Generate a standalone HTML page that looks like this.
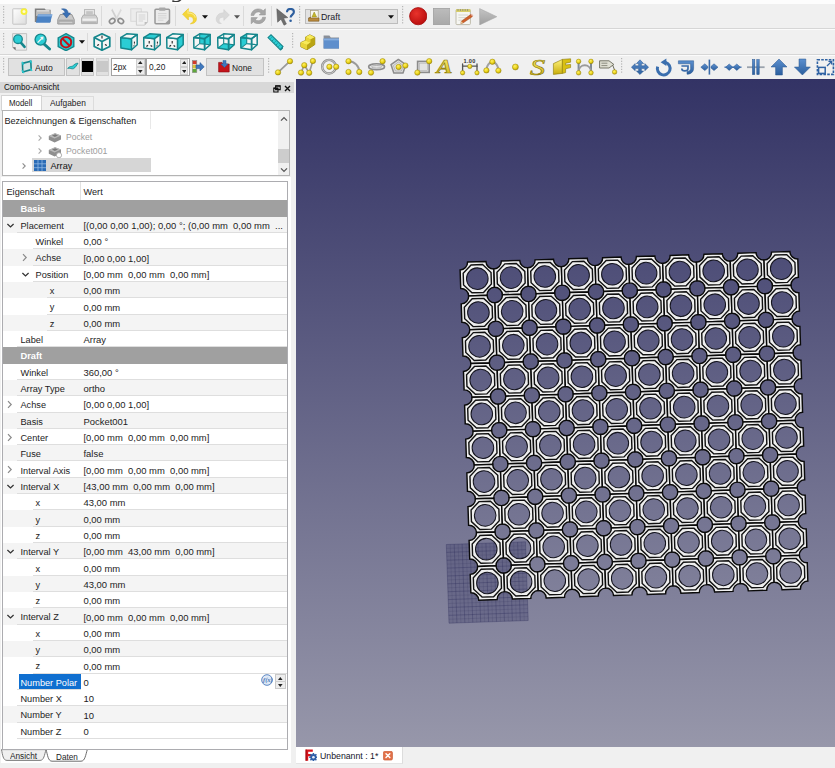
<!DOCTYPE html>
<html><head><meta charset="utf-8">
<style>
*{box-sizing:border-box;margin:0;padding:0}
html,body{width:835px;height:768px;overflow:hidden;background:#f0f0f0;font-family:"Liberation Sans",sans-serif;font-size:10.5px;color:#1c1c1c}
#root{position:relative;width:835px;height:768px;overflow:hidden;background:#f0f0f0}
.abs{position:absolute}
/* 3D view */
#view{position:absolute;left:296px;top:79px;width:539px;height:668px;background:linear-gradient(#333365 0%,#9797aa 100%)}
#viewsvg{position:absolute;left:0;top:0;width:835px;height:768px}
/* panel */
#panel{position:absolute;left:0;top:80px;width:296px;height:688px;background:#f0f0f0}
#ptitle{position:absolute;left:0;top:1.5px;width:293.5px;height:11.5px;background:#d8d8d8;}
#ptitle span{position:absolute;left:3.8px;top:0.6px;font-size:9.2px;color:#111;transform:scaleX(.88);transform-origin:0 0;white-space:nowrap}
.tab1{position:absolute;font-size:9.2px}
#tree{position:absolute;left:1.6px;top:30px;width:288.9px;height:66px;background:#fff;border:1px solid #b4b4b4;overflow:hidden}
#tbl{position:absolute;left:2.2px;top:100.6px;width:286px;height:569px;background:#fff;border:1px solid #acacb0;overflow:hidden}
.row,.grp{position:absolute;left:3.2px;width:284px}
#rows{position:absolute;left:0px;top:-80px;width:290px}
.row{background:#fff}
.ln{position:absolute;bottom:0;right:0;height:1px;background:#dedede}
.row.alt{background:#f4f4f4}
.grp{background:#a0a0a0;color:#fff;font-weight:bold}
.grp span{position:absolute;top:3.6px;font-size:9.3px;white-space:nowrap}
.nm{position:absolute;top:4.1px;white-space:nowrap;font-size:9.2px}
.nm i{font-style:normal;white-space:nowrap}
.nm.sel{top:0;height:100%;background:#0f6fd0;color:#fff;padding-left:1px;padding-top:4.1px}
.vl{position:absolute;left:80.3px;top:3.3px;white-space:nowrap;font-size:9.45px}
.arr{position:absolute;top:4px}
.hd{font-size:9.2px;white-space:nowrap}
.tx{position:absolute;white-space:nowrap;transform-origin:0 0;line-height:normal;font-size:9.2px}
.coldiv{position:absolute;left:77.3px;top:0;width:1px;height:557.4px;background:#e2e2e2}
</style></head><body><div id="root">
<!-- toolbars -->
<div class="abs" style="left:0px;top:0px;width:835px;height:3.5px;background:#fdfdfd"></div>
<div class="abs" style="left:0px;top:28.3px;width:835px;height:1px;background:#d6d6d6"></div>
<div class="abs" style="left:0px;top:29.3px;width:835px;height:1px;background:#fbfbfb"></div>
<div class="abs" style="left:0px;top:53.8px;width:835px;height:1px;background:#d6d6d6"></div>
<div class="abs" style="left:0px;top:54.8px;width:835px;height:1px;background:#fbfbfb"></div>
<svg class="abs" style="left:171.5px;top:0px" width="10" height="2.4" viewBox="0 0 10 2.4"><path d="M0.4,0.6 C2,2.4 6.4,2.2 9,-0.6" fill="none" stroke="#3a3a3a" stroke-width="1.5"/></svg>
<svg class="abs" style="left:3px;top:6px" width="2" height="20" viewBox="0 0 2 20"><rect x="0" y="0.0" width="1.2" height="1.2" fill="#b5b5b5"/><rect x="0" y="2.7" width="1.2" height="1.2" fill="#b5b5b5"/><rect x="0" y="5.4" width="1.2" height="1.2" fill="#b5b5b5"/><rect x="0" y="8.1" width="1.2" height="1.2" fill="#b5b5b5"/><rect x="0" y="10.8" width="1.2" height="1.2" fill="#b5b5b5"/><rect x="0" y="13.5" width="1.2" height="1.2" fill="#b5b5b5"/><rect x="0" y="16.2" width="1.2" height="1.2" fill="#b5b5b5"/></svg>
<svg class="abs" style="left:12px;top:8px" width="16" height="17" viewBox="0 0 16 17"><defs><linearGradient id="gp" x1="0" y1="0" x2="1" y2="1"><stop offset="0" stop-color="#ffffff"/><stop offset="1" stop-color="#dcdcdc"/></linearGradient></defs>
<rect x="0.8" y="0.8" width="13.4" height="15.4" rx=".4" fill="url(#gp)" stroke="#c4c4c4" stroke-width="1"/>
<circle cx="12" cy="3.6" r="3.4" fill="#f6ef3a"/><circle cx="12" cy="3.6" r="1.5" fill="#fffbd0"/></svg>
<svg class="abs" style="left:33.5px;top:8px" width="19" height="16" viewBox="0 0 19 16"><path d="M0.8,0.6 H10.6 L11.8,1.8 H16.6 V14 H0.8 Z" fill="#7f7f7f"/><path d="M2.4,2 H15.6 V8 H2.4 Z" fill="#d6d6d6"/><path d="M2.4,3.6 H15.6 V8 H2.4 Z" fill="#bdbdbd"/>
<path d="M4,6.5 H18.4 L16.2,14.8 H1.8 Z" fill="#4a82c4"/><path d="M4,6.5 H18.4 L17.8,8.6 H3.4 Z" fill="#7fabdf"/></svg>
<svg class="abs" style="left:57px;top:7.5px" width="18" height="17" viewBox="0 0 18 17"><path d="M3.2,6.5 H14.8 L17.2,11.5 V16 H0.8 V11.5 Z" fill="#c9c9c9" stroke="#8c8c8c" stroke-width=".9"/>
<rect x="1.4" y="11.6" width="15.2" height="4" fill="#a9a9a9"/><rect x="2.4" y="13.8" width="13" height="1" fill="#d8d8d8"/>
<path d="M4.5,1 C8.5,0.2 11,1.8 11.2,5 L13.6,5 L9.6,10 L5.6,5 L8,5 C7.8,3 6.5,1.8 4.5,1 Z" fill="#3a70b5" stroke="#2c5a96" stroke-width=".5"/></svg>
<svg class="abs" style="left:80.5px;top:8.5px" width="17" height="16" viewBox="0 0 17 16"><rect x="3.4" y="0.6" width="10.2" height="6" fill="#e4e4e4" stroke="#b0b0b0" stroke-width=".8"/><rect x="5.2" y="2.2" width="6.6" height="3" fill="#c4c4c4"/>
<path d="M2.4,6 H14.6 L16.4,9 V14.6 H0.6 V9 Z" fill="#cfcfcf" stroke="#a2a2a2" stroke-width=".8"/><rect x="1.4" y="9.6" width="14.2" height="2.2" fill="#efefef"/><rect x="1.4" y="12.6" width="14.2" height="1.4" fill="#b6b6b6"/></svg>
<div class="abs" style="left:101.3px;top:6px;width:1px;height:20px;background:#dadada"></div>
<svg class="abs" style="left:107.5px;top:8px" width="17" height="17" viewBox="0 0 17 17"><path d="M4.2,0.6 L9.6,10.6 L8,11.4 L3.4,2.6 Z" fill="#cfcfcf"/><path d="M12.8,0.6 L7.4,10.6 L9,11.4 L13.6,2.6 Z" fill="#dadada"/>
<ellipse cx="4.2" cy="13" rx="2.9" ry="2.3" transform="rotate(-35 4.2 13)" fill="none" stroke="#8e8e8e" stroke-width="1.7"/>
<ellipse cx="12.8" cy="13" rx="2.9" ry="2.3" transform="rotate(35 12.8 13)" fill="none" stroke="#8e8e8e" stroke-width="1.7"/></svg>
<svg class="abs" style="left:129.5px;top:7.5px" width="19" height="18" viewBox="0 0 19 18"><rect x="0.8" y="0.8" width="10.5" height="12.5" fill="#ececec" stroke="#d9d9d9" stroke-width="1"/>
<path d="M6.4,4 H17.6 V14 L14.6,17.2 H6.4 Z" fill="#f0f0f0" stroke="#cfcfcf" stroke-width="1"/><path d="M8.6,7 H15.4 M8.6,9 H15.4 M8.6,11 H15.4 M8.6,13 H13" stroke="#d4d4d4" stroke-width="1"/><path d="M14.6,17.2 V14 H17.6 Z" fill="#bdbdbd"/></svg>
<svg class="abs" style="left:154px;top:7.3px" width="16.5" height="17.6" viewBox="0 0 16.5 17.6"><rect x="1" y="2.2" width="14.5" height="14.6" rx="1" fill="#ebebeb" stroke="#999" stroke-width="1.5"/><rect x="5" y="0.4" width="6.5" height="3.4" rx=".8" fill="#a9a9a9"/>
<path d="M4,6.6 H12.5 M4,8.8 H12.5 M4,11 H12.5 M4,13.2 H9.5" stroke="#d0d0d0" stroke-width=".9"/><path d="M11.2,16.2 L15,12.6 V16.2 Z" fill="#9d9d9d"/></svg>
<div class="abs" style="left:175px;top:6px;width:1px;height:20px;background:#dadada"></div>
<svg class="abs" style="left:181.5px;top:8px" width="16" height="16.5" viewBox="0 0 16 16.5"><path d="M6.4,0.6 L6.4,4 C11.4,4 14.6,7 14.4,11.4 C14.2,14.2 11.6,15.8 8.4,15.8 C11,14.6 11.8,12.6 11.2,10.8 C10.6,9 9,8.6 6.4,8.6 L6.4,12 L0.6,6.2 Z" fill="#f4d63a" stroke="#e8c41a" stroke-width=".6"/><path d="M6,2 L6,5 C9.5,5 12.6,6.8 13.4,9.6" fill="none" stroke="#fbeb8c" stroke-width="1.1"/></svg>
<svg class="abs" style="left:202.3px;top:14.8px" width="6" height="4" viewBox="0 0 6 4"><path d="M0,0.3 H6 L3,3.8 Z" fill="#111"/></svg>
<svg class="abs" style="left:214.8px;top:8.5px" width="15" height="15.5" viewBox="0 0 15 15.5"><path d="M8.8,0.6 L8.8,3.8 C4,3.8 1,6.6 1.2,10.8 C1.4,13.4 3.6,15 6.6,15 C4.4,13.8 3.8,12 4.2,10.4 C4.8,8.6 6.4,8.2 8.8,8.2 L8.8,11.4 L14.4,6 Z" fill="#d9d9d9" stroke="#cdcdcd" stroke-width=".5"/></svg>
<svg class="abs" style="left:234.4px;top:14.8px" width="6" height="4" viewBox="0 0 6 4"><path d="M0,0.3 H6 L3,3.8 Z" fill="#555"/></svg>
<div class="abs" style="left:243.2px;top:6px;width:1px;height:20px;background:#dadada"></div>
<svg class="abs" style="left:249.5px;top:7.8px" width="16.6" height="16.6" viewBox="0 0 16.6 16.6"><path d="M1,7.4 C1.4,3.4 4.6,0.9 8.4,0.9 C10.4,0.9 12,1.6 13.2,2.8 L15.4,0.8 V7 H9.2 L11.2,4.9 C10.4,4.2 9.4,3.9 8.4,3.9 C6,3.9 4.4,5.4 4,7.4 Z" fill="#a6a6a6" stroke="#8f8f8f" stroke-width=".5"/>
<path d="M15.6,9.2 C15.2,13.2 12,15.7 8.2,15.7 C6.2,15.7 4.6,15 3.4,13.8 L1.2,15.8 V9.6 H7.4 L5.4,11.7 C6.2,12.4 7.2,12.7 8.2,12.7 C10.6,12.7 12.2,11.2 12.6,9.2 Z" fill="#a6a6a6" stroke="#8f8f8f" stroke-width=".5"/></svg>
<div class="abs" style="left:270.7px;top:6px;width:1px;height:20px;background:#dadada"></div>
<svg class="abs" style="left:275.5px;top:7.5px" width="19" height="18" viewBox="0 0 19 18"><path d="M0.8,0.8 L1.6,14.2 L5,11.2 L8,17.2 L10.4,16 L7.6,10.2 L11.8,9.6 Z" fill="#6e6e6e" stroke="#555" stroke-width=".5"/>
<path d="M11,4.2 C11,1.8 12.6,0.9 14.4,0.9 C16.4,0.9 17.9,2 17.9,4 C17.9,6.6 14.6,6.6 14.6,9.6" fill="none" stroke="#2e5f9e" stroke-width="2.1"/><circle cx="14.6" cy="12.8" r="1.3" fill="#2e5f9e"/></svg>
<svg class="abs" style="left:298.5px;top:6px" width="2" height="20" viewBox="0 0 2 20"><rect x="0" y="0.0" width="1.2" height="1.2" fill="#b5b5b5"/><rect x="0" y="2.7" width="1.2" height="1.2" fill="#b5b5b5"/><rect x="0" y="5.4" width="1.2" height="1.2" fill="#b5b5b5"/><rect x="0" y="8.1" width="1.2" height="1.2" fill="#b5b5b5"/><rect x="0" y="10.8" width="1.2" height="1.2" fill="#b5b5b5"/><rect x="0" y="13.5" width="1.2" height="1.2" fill="#b5b5b5"/><rect x="0" y="16.2" width="1.2" height="1.2" fill="#b5b5b5"/></svg>
<div class="abs" style="left:305px;top:8.8px;width:92.6px;height:14.8px;background:#e2e2e2;border:1px solid #bdbdbd"></div>
<svg class="abs" style="left:308.4px;top:10.2px" width="11.6" height="12" viewBox="0 0 11.6 12"><rect x="2.6" y="0.5" width="7.6" height="8.4" fill="#f7f7f0" stroke="#a59a78" stroke-width=".7"/><path d="M4,7 L6.2,2 L8.6,7 Z" fill="#c7b92a" stroke="#8d8412" stroke-width=".5"/>
<path d="M0.5,8 H11 V11.2 H0.5 Z" fill="#b98a3c" stroke="#7d5a22" stroke-width=".6"/><path d="M0.5,8 L2.6,6.8 V8" fill="#7d5a22"/></svg>
<div class="abs" style="left:321.3px;top:10.6px;font-size:9.6px;color:#1a1a2a;transform:scaleX(.92);transform-origin:0 0;white-space:nowrap">Draft</div>
<svg class="abs" style="left:388px;top:14.9px" width="6" height="4" viewBox="0 0 6 4"><path d="M0,0.3 H6 L3,3.8 Z" fill="#111"/></svg>
<svg class="abs" style="left:401.7px;top:6px" width="2" height="20" viewBox="0 0 2 20"><rect x="0" y="0.0" width="1.2" height="1.2" fill="#b5b5b5"/><rect x="0" y="2.7" width="1.2" height="1.2" fill="#b5b5b5"/><rect x="0" y="5.4" width="1.2" height="1.2" fill="#b5b5b5"/><rect x="0" y="8.1" width="1.2" height="1.2" fill="#b5b5b5"/><rect x="0" y="10.8" width="1.2" height="1.2" fill="#b5b5b5"/><rect x="0" y="13.5" width="1.2" height="1.2" fill="#b5b5b5"/><rect x="0" y="16.2" width="1.2" height="1.2" fill="#b5b5b5"/></svg>
<svg class="abs" style="left:408.8px;top:7.2px" width="18.4" height="18.4" viewBox="0 0 18.4 18.4"><defs><radialGradient id="gr" cx=".4" cy=".35" r=".7"><stop offset="0" stop-color="#e8332c"/><stop offset="1" stop-color="#b80d0d"/></radialGradient></defs><circle cx="9.2" cy="9.2" r="8.6" fill="url(#gr)" stroke="#a30a0a" stroke-width=".8"/></svg>
<svg class="abs" style="left:432.5px;top:7.8px" width="17.5" height="17.5" viewBox="0 0 17.5 17.5"><defs><linearGradient id="gs" x1="0" y1="0" x2="0" y2="1"><stop offset="0" stop-color="#bcbcbc"/><stop offset="1" stop-color="#a8a8a8"/></linearGradient></defs><rect x=".4" y=".4" width="16.7" height="16.7" fill="url(#gs)" stroke="#a0a0a0" stroke-width=".8"/></svg>
<svg class="abs" style="left:455px;top:8px" width="19" height="17.5" viewBox="0 0 19 17.5"><rect x="1" y="1.6" width="14.4" height="15" rx="1" fill="#f6f6f2" stroke="#b9b6a4" stroke-width=".9"/><rect x="1" y="1.2" width="14.4" height="2.8" fill="#d8cf6a"/><path d="M3,1 V3 M5.4,1 V3 M7.8,1 V3 M10.2,1 V3 M12.6,1 V3" stroke="#8a8a7a" stroke-width=".8"/>
<path d="M3.4,7 H13 M3.4,9.6 H11 M3.4,12.2 H9" stroke="#d2d2cc" stroke-width=".9"/><path d="M6.4,13.2 L15.6,6.6 L17.4,8.6 L8,15 L5.8,15.4 Z" fill="#d0602a" stroke="#9a3f14" stroke-width=".5"/><path d="M15.6,6.6 L17.4,8.6 L18.4,7.8 L16.8,5.8 Z" fill="#e8b0a0"/><path d="M5.8,15.4 L6.4,13.2 L8,15 Z" fill="#e8d6a0"/></svg>
<svg class="abs" style="left:478.5px;top:7.8px" width="18.5" height="17.5" viewBox="0 0 18.5 17.5"><defs><linearGradient id="gpl" x1="0" y1="0" x2="0" y2="1"><stop offset="0" stop-color="#c4c4c4"/><stop offset="1" stop-color="#9f9f9f"/></linearGradient></defs><path d="M0.6,0.6 L17.8,8.7 L0.6,16.9 Z" fill="url(#gpl)" stroke="#aaa" stroke-width=".6"/></svg>
<svg class="abs" style="left:3px;top:33px" width="2" height="18" viewBox="0 0 2 18"><rect x="0" y="0.0" width="1.2" height="1.2" fill="#b5b5b5"/><rect x="0" y="2.7" width="1.2" height="1.2" fill="#b5b5b5"/><rect x="0" y="5.4" width="1.2" height="1.2" fill="#b5b5b5"/><rect x="0" y="8.1" width="1.2" height="1.2" fill="#b5b5b5"/><rect x="0" y="10.8" width="1.2" height="1.2" fill="#b5b5b5"/><rect x="0" y="13.5" width="1.2" height="1.2" fill="#b5b5b5"/></svg>
<svg class="abs" style="left:12px;top:33px" width="15.5" height="18" viewBox="0 0 15.5 18"><path d="M0.6,0.6 H14.6 V17.2 H3.6 L0.6,14.2 Z" fill="#ebebeb" stroke="#bcbcbc" stroke-width=".9"/><path d="M0.6,14.2 H3.6 V17.2 Z" fill="#6a6a6a"/>
<path d="M8,8.6 L12.6,13.8" stroke="#15868c" stroke-width="2.6" stroke-linecap="round"/><circle cx="6" cy="6.2" r="4.3" fill="#2bcdd4" stroke="#15868c" stroke-width="1.3"/></svg>
<svg class="abs" style="left:33.8px;top:33px" width="17.6" height="18" viewBox="0 0 17.6 18"><path d="M9.6,10.6 L15.6,16" stroke="#15868c" stroke-width="2.8" stroke-linecap="round"/><circle cx="6.6" cy="6.6" r="5.5" fill="#2bcdd4" stroke="#15868c" stroke-width="1.4"/>
<path d="M3.6,9.6 L8,5.2" stroke="#f2f2f2" stroke-width="1.3"/><path d="M9.6,3.6 L9.2,7.2 L6,4 Z" fill="#f2f2f2"/></svg>
<svg class="abs" style="left:56.6px;top:32.8px" width="18" height="18.4" viewBox="0 0 18 18.4"><path d="M9,0.7 L16.8,4.9 V13.5 L9,17.7 L1.2,13.5 V4.9 Z" fill="#2bcdd4" stroke="#15868c" stroke-width="1.4"/>
<circle cx="9" cy="9.2" r="5.2" fill="none" stroke="#c4121a" stroke-width="2"/><path d="M5.4,5.6 L12.6,12.8" stroke="#c4121a" stroke-width="2"/></svg>
<svg class="abs" style="left:79px;top:40.2px" width="6" height="4" viewBox="0 0 6 4"><path d="M0,0.3 H6 L3,3.8 Z" fill="#111"/></svg>
<div class="abs" style="left:87.3px;top:33px;width:1px;height:18px;background:#dadada"></div>
<svg class="abs" style="left:92.8px;top:33px" width="18" height="18" viewBox="0 0 18 18"><path d="M9,0.8 L16.8,4.6 L16.8,13.4 L9,17.2 L1.2,13.4 L1.2,4.6 Z" fill="#f6f6f6" /><path d="M9,0.8 L16.8,4.6 V13.4 L9,17.2 L1.2,13.4 V4.6 Z" fill="none" stroke="#15868c" stroke-width="1.7" stroke-linejoin="round"/><path d="M1.2,4.6 L9,8.6 L16.8,4.6 M9,8.6 V17.2" fill="none" stroke="#15868c" stroke-width="1.7"/><path d="M9,2.6 V5.6" stroke="#222" stroke-width="1.1"/><path d="M4.2,12.6 L6,11.4" stroke="#222" stroke-width="1.2"/><path d="M12,11.4 L13.8,12.4" stroke="#222" stroke-width="1.2"/></svg>
<div class="abs" style="left:114.5px;top:33px;width:1px;height:18px;background:#dadada"></div>
<svg class="abs" style="left:120px;top:33px" width="18" height="18" viewBox="0 0 18 18"><path d="M0.7,4.6 L6.7,0.8 L17.2,1.6 L17.2,11.8 L11.6,16.7 L0.9,15.1 Z" fill="#f6f6f6" /><path d="M0.7,4.6 L11.6,5.7 L11.6,16.7 L0.9,15.1 Z" fill="#2bcdd4" stroke="#15868c" stroke-width="1.5" stroke-linejoin="round"/><path d="M0.7,4.6 L6.7,0.8 L17.2,1.6 L11.6,5.7 Z" fill="#f6f6f6" stroke="#15868c" stroke-width="1.5" stroke-linejoin="round"/><path d="M11.6,5.7 L17.2,1.6 L17.2,11.8 L11.6,16.7 Z" fill="#f6f6f6" stroke="#15868c" stroke-width="1.5" stroke-linejoin="round"/><path d="M14.4,8.6 V10.6" stroke="#222" stroke-width="1"/><path d="M13.4,13 L14.6,12" stroke="#222" stroke-width="1"/></svg>
<svg class="abs" style="left:143px;top:33px" width="18" height="18" viewBox="0 0 18 18"><path d="M0.7,4.6 L6.7,0.8 L17.2,1.6 L17.2,11.8 L11.6,16.7 L0.9,15.1 Z" fill="#f6f6f6" /><path d="M0.7,4.6 L11.6,5.7 L11.6,16.7 L0.9,15.1 Z" fill="#f6f6f6" stroke="#15868c" stroke-width="1.5" stroke-linejoin="round"/><path d="M0.7,4.6 L6.7,0.8 L17.2,1.6 L11.6,5.7 Z" fill="#2bcdd4" stroke="#15868c" stroke-width="1.5" stroke-linejoin="round"/><path d="M11.6,5.7 L17.2,1.6 L17.2,11.8 L11.6,16.7 Z" fill="#f6f6f6" stroke="#15868c" stroke-width="1.5" stroke-linejoin="round"/><path d="M6.2,8 V10.4" stroke="#222" stroke-width="1.1"/><path d="M3.4,13.4 L5,12.2" stroke="#222" stroke-width="1.2"/><path d="M7.6,12.4 L9.2,13.4" stroke="#222" stroke-width="1.2"/><path d="M14.4,8.6 V10.6" stroke="#222" stroke-width="1"/><path d="M13.4,13 L14.6,12" stroke="#222" stroke-width="1"/></svg>
<svg class="abs" style="left:166px;top:33px" width="18" height="18" viewBox="0 0 18 18"><path d="M0.7,4.6 L6.7,0.8 L17.2,1.6 L17.2,11.8 L11.6,16.7 L0.9,15.1 Z" fill="#f6f6f6" /><path d="M0.7,4.6 L11.6,5.7 L11.6,16.7 L0.9,15.1 Z" fill="#f6f6f6" stroke="#15868c" stroke-width="1.5" stroke-linejoin="round"/><path d="M0.7,4.6 L6.7,0.8 L17.2,1.6 L11.6,5.7 Z" fill="#f6f6f6" stroke="#15868c" stroke-width="1.5" stroke-linejoin="round"/><path d="M11.6,5.7 L17.2,1.6 L17.2,11.8 L11.6,16.7 Z" fill="#2bcdd4" stroke="#15868c" stroke-width="1.5" stroke-linejoin="round"/><path d="M6.2,8 V10.4" stroke="#222" stroke-width="1.1"/><path d="M3.4,13.4 L5,12.2" stroke="#222" stroke-width="1.2"/><path d="M7.6,12.4 L9.2,13.4" stroke="#222" stroke-width="1.2"/></svg>
<div class="abs" style="left:187.3px;top:33px;width:1px;height:18px;background:#dadada"></div>
<svg class="abs" style="left:193.3px;top:33px" width="18" height="18" viewBox="0 0 18 18"><path d="M0.7,4.6 L6.7,0.8 L17.2,1.6 L17.2,11.8 L11.6,16.7 L0.9,15.1 Z" fill="#f6f6f6" /><path d="M6.7,0.8 L17.2,1.6 L17.2,11.8 L6.7,10.6 Z" fill="#2bcdd4" /><path d="M0.7,4.6 L6.7,0.8 L6.7,10.6 L0.9,15.1 Z" fill="#f6f6f6" /><path d="M0.9,15.1 L6.7,10.6 L17.2,11.8 L11.6,16.7 Z" fill="#f6f6f6" /><path d="M6.7,0.8 V10.6 L0.9,15.1 M6.7,10.6 L17.2,11.8" fill="none" stroke="#15868c" stroke-width="1.1"/><path d="M0.7,4.6 L11.6,5.7 L11.6,16.7 L0.9,15.1 Z" fill="none" stroke="#15868c" stroke-width="1.5" stroke-linejoin="round"/><path d="M0.7,4.6 L6.7,0.8 L17.2,1.6 L11.6,5.7 Z" fill="none" stroke="#15868c" stroke-width="1.5" stroke-linejoin="round"/><path d="M11.6,5.7 L17.2,1.6 L17.2,11.8 L11.6,16.7 Z" fill="none" stroke="#15868c" stroke-width="1.5" stroke-linejoin="round"/></svg>
<svg class="abs" style="left:216.6px;top:33px" width="18" height="18" viewBox="0 0 18 18"><path d="M0.7,4.6 L6.7,0.8 L17.2,1.6 L17.2,11.8 L11.6,16.7 L0.9,15.1 Z" fill="#f6f6f6" /><path d="M6.7,0.8 L17.2,1.6 L17.2,11.8 L6.7,10.6 Z" fill="#f6f6f6" /><path d="M0.7,4.6 L6.7,0.8 L6.7,10.6 L0.9,15.1 Z" fill="#f6f6f6" /><path d="M0.9,15.1 L6.7,10.6 L17.2,11.8 L11.6,16.7 Z" fill="#2bcdd4" /><path d="M6.7,0.8 V10.6 L0.9,15.1 M6.7,10.6 L17.2,11.8" fill="none" stroke="#15868c" stroke-width="1.1"/><path d="M0.7,4.6 L11.6,5.7 L11.6,16.7 L0.9,15.1 Z" fill="none" stroke="#15868c" stroke-width="1.5" stroke-linejoin="round"/><path d="M0.7,4.6 L6.7,0.8 L17.2,1.6 L11.6,5.7 Z" fill="none" stroke="#15868c" stroke-width="1.5" stroke-linejoin="round"/><path d="M11.6,5.7 L17.2,1.6 L17.2,11.8 L11.6,16.7 Z" fill="none" stroke="#15868c" stroke-width="1.5" stroke-linejoin="round"/></svg>
<svg class="abs" style="left:240px;top:33px" width="18" height="18" viewBox="0 0 18 18"><path d="M0.7,4.6 L6.7,0.8 L17.2,1.6 L17.2,11.8 L11.6,16.7 L0.9,15.1 Z" fill="#f6f6f6" /><path d="M6.7,0.8 L17.2,1.6 L17.2,11.8 L6.7,10.6 Z" fill="#f6f6f6" /><path d="M0.7,4.6 L6.7,0.8 L6.7,10.6 L0.9,15.1 Z" fill="#2bcdd4" /><path d="M0.9,15.1 L6.7,10.6 L17.2,11.8 L11.6,16.7 Z" fill="#f6f6f6" /><path d="M6.7,0.8 V10.6 L0.9,15.1 M6.7,10.6 L17.2,11.8" fill="none" stroke="#15868c" stroke-width="1.1"/><path d="M0.7,4.6 L11.6,5.7 L11.6,16.7 L0.9,15.1 Z" fill="none" stroke="#15868c" stroke-width="1.5" stroke-linejoin="round"/><path d="M0.7,4.6 L6.7,0.8 L17.2,1.6 L11.6,5.7 Z" fill="none" stroke="#15868c" stroke-width="1.5" stroke-linejoin="round"/><path d="M11.6,5.7 L17.2,1.6 L17.2,11.8 L11.6,16.7 Z" fill="none" stroke="#15868c" stroke-width="1.5" stroke-linejoin="round"/></svg>
<svg class="abs" style="left:266.5px;top:33.5px" width="17" height="17" viewBox="0 0 17 17"><path d="M1,3.6 L4,0.8 L16,12.6 L13.2,15.6 Z" fill="#2bcdd4" stroke="#15868c" stroke-width="1.1"/><path d="M13.2,15.6 L16,12.6 V14.6 L13.6,16.8 Z" fill="#15868c"/>
<path d="M4.6,3.4 L3.4,4.6 M6.6,5.4 L5,7 M8.6,7.4 L7.4,8.6 M10.6,9.4 L9,11 M12.6,11.4 L11.4,12.6" stroke="#15868c" stroke-width=".8"/></svg>
<svg class="abs" style="left:291.5px;top:33px" width="2" height="18" viewBox="0 0 2 18"><rect x="0" y="0.0" width="1.2" height="1.2" fill="#b5b5b5"/><rect x="0" y="2.7" width="1.2" height="1.2" fill="#b5b5b5"/><rect x="0" y="5.4" width="1.2" height="1.2" fill="#b5b5b5"/><rect x="0" y="8.1" width="1.2" height="1.2" fill="#b5b5b5"/><rect x="0" y="10.8" width="1.2" height="1.2" fill="#b5b5b5"/><rect x="0" y="13.5" width="1.2" height="1.2" fill="#b5b5b5"/></svg>
<svg class="abs" style="left:300.3px;top:33.6px" width="15.6" height="16.6" viewBox="0 0 15.6 16.6"><path d="M0.8,8.6 L5.6,6.4 V3 L9.8,0.8 L14.8,3.2 V10.6 L7,15.8 L0.8,12.8 Z" fill="#d9c21c" stroke="#8a7a10" stroke-width=".8"/>
<path d="M5.6,3 L9.8,0.8 L14.8,3.2 L10.4,5.4 Z" fill="#f7ea5a"/><path d="M0.8,8.6 L5.6,6.4 L10.4,8.6 L7,11 Z" fill="#f7ea5a"/><path d="M10.4,5.4 V8.6 L7,11 V15.8 L14.8,10.6 V3.2 Z" fill="#b9a414"/><path d="M5.6,3 L10.4,5.4 V8.6 L5.6,6.4 Z" fill="#e8d43a"/><path d="M0.8,8.6 L7,11 V15.8 L0.8,12.8 Z" fill="#e8d43a"/></svg>
<svg class="abs" style="left:322.5px;top:34.6px" width="16.6" height="14.2" viewBox="0 0 16.6 14.2"><path d="M0.6,0.6 H6.4 L7.8,2.4 H16 V13.6 H0.6 Z" fill="#8a8f98"/><path d="M0.6,3.6 H16 V13.6 H0.6 Z" fill="#5f8fcc"/><path d="M0.6,3.6 H16 V5.4 H0.6 Z" fill="#86addf"/></svg>
<svg class="abs" style="left:3px;top:58px" width="2" height="18" viewBox="0 0 2 18"><rect x="0" y="0.0" width="1.2" height="1.2" fill="#b5b5b5"/><rect x="0" y="2.7" width="1.2" height="1.2" fill="#b5b5b5"/><rect x="0" y="5.4" width="1.2" height="1.2" fill="#b5b5b5"/><rect x="0" y="8.1" width="1.2" height="1.2" fill="#b5b5b5"/><rect x="0" y="10.8" width="1.2" height="1.2" fill="#b5b5b5"/><rect x="0" y="13.5" width="1.2" height="1.2" fill="#b5b5b5"/></svg>
<div class="abs" style="left:8px;top:57.8px;width:56.8px;height:18px;background:#e1e1e1;border:1px solid #c2c2c2"></div>
<svg class="abs" style="left:21px;top:60.2px" width="11.5" height="13.4" viewBox="0 0 11.5 13.4"><path d="M1.4,3.4 L9.8,1.2 L10.2,9.6 L1.8,12 Z" fill="#d5e2e3" stroke="#15868c" stroke-width="1.6"/><path d="M1,1.8 L2.6,5 M9,0.4 L10.6,3 M0.8,10.4 L3,13 M9.4,8.4 L11,11" stroke="#2bcdd4" stroke-width="1.4"/></svg>
<div class="abs" style="left:35.2px;top:62.4px;font-size:9.6px;color:#1a1a1a;white-space:nowrap;transform:scaleX(.9);transform-origin:0 0">Auto</div>
<div class="abs" style="left:66.2px;top:57.8px;width:14px;height:18px;background:#e1e1e1;border:1px solid #c2c2c2"></div>
<svg class="abs" style="left:67.4px;top:62.4px" width="11.6" height="8" viewBox="0 0 11.6 8"><path d="M0.6,6.4 C2.6,4 4.4,4.8 5.6,4 C7,3 8.6,1 11,1.2 C9.6,3.4 8.4,5.6 6.6,6.6 C4.8,7.4 3,5.8 0.6,6.4 Z" fill="#2bcdd4" stroke="#15868c" stroke-width=".8"/></svg>
<div class="abs" style="left:81px;top:57.8px;width:13.4px;height:18px;background:#e1e1e1;border:1px solid #c4c4c4"></div>
<div class="abs" style="left:82px;top:61.2px;width:11.2px;height:10.8px;background:#000"></div>
<div class="abs" style="left:96px;top:57.8px;width:13.4px;height:18px;background:#e1e1e1;border:1px solid #d0d0d0"></div>
<div class="abs" style="left:97.3px;top:61.2px;width:10.8px;height:10.8px;background:#c9c9c9"></div>
<div class="abs" style="left:110.6px;top:57.6px;width:35.4px;height:18.4px;background:#fff;border:1px solid #a2a2a2"></div>
<div class="abs" style="left:112.8px;top:62.4px;font-size:9.3px;color:#1a1a1a;white-space:nowrap;transform:scaleX(.9);transform-origin:0 0">2px</div>
<div class="abs" style="left:136.0px;top:59px;width:8.6px;height:7.6px;background:#ececec;border:1px solid #cfcfcf"></div>
<div class="abs" style="left:136.0px;top:67px;width:8.6px;height:7.6px;background:#ececec;border:1px solid #cfcfcf"></div>
<svg class="abs" style="left:138.0px;top:61.2px" width="4.6" height="3" viewBox="0 0 4.6 3"><path d="M0,3 L2.3,0 L4.6,3 Z" fill="#222"/></svg>
<svg class="abs" style="left:138.0px;top:69.6px" width="4.6" height="3" viewBox="0 0 4.6 3"><path d="M0,0 L2.3,3 L4.6,0 Z" fill="#222"/></svg>
<div class="abs" style="left:146.4px;top:57.6px;width:43.2px;height:18.4px;background:#fff;border:1px solid #a2a2a2"></div>
<div class="abs" style="left:148.6px;top:62.4px;font-size:9.3px;color:#1a1a1a;white-space:nowrap;transform:scaleX(.9);transform-origin:0 0">0,20</div>
<div class="abs" style="left:179.60000000000002px;top:59px;width:8.6px;height:7.6px;background:#ececec;border:1px solid #cfcfcf"></div>
<div class="abs" style="left:179.60000000000002px;top:67px;width:8.6px;height:7.6px;background:#ececec;border:1px solid #cfcfcf"></div>
<svg class="abs" style="left:181.60000000000002px;top:61.2px" width="4.6" height="3" viewBox="0 0 4.6 3"><path d="M0,3 L2.3,0 L4.6,3 Z" fill="#222"/></svg>
<svg class="abs" style="left:181.60000000000002px;top:69.6px" width="4.6" height="3" viewBox="0 0 4.6 3"><path d="M0,0 L2.3,3 L4.6,0 Z" fill="#222"/></svg>
<svg class="abs" style="left:192px;top:60px" width="12.6" height="13.4" viewBox="0 0 12.6 13.4"><rect x="0.4" y="0.6" width="4.4" height="3.6" fill="#d23a2a"/><rect x="0.4" y="4.8" width="4.4" height="3.6" fill="#d9c23a"/><rect x="0.4" y="9" width="4.4" height="3.6" fill="#5fa83a"/><rect x="0.4" y="0.6" width="4.4" height="12" fill="none" stroke="#888" stroke-width=".6"/>
<path d="M4,5 H8 V2.6 L12.2,6.8 L8,11 V8.6 H4 Z" fill="#3f78bd" stroke="#2b5a96" stroke-width=".6"/></svg>
<div class="abs" style="left:206.4px;top:57.8px;width:57.2px;height:18px;background:#e1e1e1;border:1px solid #c2c2c2"></div>
<svg class="abs" style="left:217.8px;top:60.4px" width="11.8" height="12.6" viewBox="0 0 11.8 12.6"><path d="M0.6,2.4 H4 L5,4 H11.2 V12 H0.6 Z" fill="#c4141c" stroke="#8a0a10" stroke-width=".6"/><path d="M5,0.4 H8 V4 H10 L6.5,7.6 L3,4 H5 Z" fill="#3f78bd" stroke="#2b5a96" stroke-width=".5"/></svg>
<div class="abs" style="left:232.2px;top:62.4px;font-size:9.6px;color:#1a1a1a;white-space:nowrap;transform:scaleX(.87);transform-origin:0 0">None</div>
<svg class="abs" style="left:267.6px;top:58px" width="2" height="18" viewBox="0 0 2 18"><rect x="0" y="0.0" width="1.2" height="1.2" fill="#b5b5b5"/><rect x="0" y="2.7" width="1.2" height="1.2" fill="#b5b5b5"/><rect x="0" y="5.4" width="1.2" height="1.2" fill="#b5b5b5"/><rect x="0" y="8.1" width="1.2" height="1.2" fill="#b5b5b5"/><rect x="0" y="10.8" width="1.2" height="1.2" fill="#b5b5b5"/><rect x="0" y="13.5" width="1.2" height="1.2" fill="#b5b5b5"/></svg>
<svg class="abs" style="left:0;top:0" width="835" height="80" viewBox="0 0 835 80"><defs><radialGradient id="yd" cx=".4" cy=".35" r=".7"><stop offset="0" stop-color="#fff06a"/><stop offset=".55" stop-color="#ecd51a"/><stop offset="1" stop-color="#a89208"/></radialGradient><linearGradient id="bl" x1="0" y1="0" x2="0" y2="1"><stop offset="0" stop-color="#5b8fcf"/><stop offset="1" stop-color="#2c5f9e"/></linearGradient><linearGradient id="yl" x1="0" y1="0" x2="0" y2="1"><stop offset="0" stop-color="#fff27a"/><stop offset="1" stop-color="#c9ae0c"/></linearGradient></defs>
<path d="M278,72.4 L290,61.2" fill="none" stroke="#9a9a9a" stroke-width="1.8" stroke-linecap="round"/>
<circle cx="278" cy="72.4" r="2.7" fill="url(#yd)" stroke="#9a860a" stroke-width=".5"/>
<circle cx="290" cy="61.2" r="2.7" fill="url(#yd)" stroke="#9a860a" stroke-width=".5"/>
<path d="M301,72.6 L304.3,65.2 L309.2,72.8 L312.9,61" fill="none" stroke="#9a9a9a" stroke-width="1.6" stroke-linecap="round"/>
<circle cx="301" cy="72.6" r="2.7" fill="url(#yd)" stroke="#9a860a" stroke-width=".5"/>
<circle cx="304.3" cy="65.2" r="2.7" fill="url(#yd)" stroke="#9a860a" stroke-width=".5"/>
<circle cx="309.2" cy="72.8" r="2.7" fill="url(#yd)" stroke="#9a860a" stroke-width=".5"/>
<circle cx="312.9" cy="61" r="2.7" fill="url(#yd)" stroke="#9a860a" stroke-width=".5"/>
<circle cx="329" cy="66.7" r="6.8" fill="none" stroke="#8c8c8c" stroke-width="2.4"/><circle cx="329" cy="66.7" r="6.8" fill="none" stroke="#d8d8d8" stroke-width=".8"/>
<circle cx="329.4" cy="66.8" r="2.7" fill="url(#yd)" stroke="#9a860a" stroke-width=".5"/>
<circle cx="336.2" cy="66.8" r="2.7" fill="url(#yd)" stroke="#9a860a" stroke-width=".5"/>
<path d="M348.5,61.2 C354.5,61.2 359.3,66 359.3,72" fill="none" stroke="#9a9a9a" stroke-width="2" stroke-linecap="round"/>
<circle cx="348.5" cy="61.2" r="2.7" fill="url(#yd)" stroke="#9a860a" stroke-width=".5"/>
<circle cx="348.5" cy="72" r="2.7" fill="url(#yd)" stroke="#9a860a" stroke-width=".5"/>
<circle cx="359.3" cy="72" r="2.7" fill="url(#yd)" stroke="#9a860a" stroke-width=".5"/>
<ellipse cx="376.6" cy="66.8" rx="8" ry="3" fill="#e6e6e6" stroke="#8c8c8c" stroke-width="1.5"/><ellipse cx="376.6" cy="66.8" rx="5" ry="1.3" fill="none" stroke="#9a9a9a" stroke-width=".7"/>
<circle cx="371" cy="72.6" r="2.7" fill="url(#yd)" stroke="#9a860a" stroke-width=".5"/>
<circle cx="382.6" cy="61.2" r="2.7" fill="url(#yd)" stroke="#9a860a" stroke-width=".5"/>
<path d="M398.4,59.4 L405.8,64.6 L403,73 H393.8 L391,64.6 Z" fill="#e2e2e2" stroke="#8c8c8c" stroke-width="1.5" stroke-linejoin="round"/><path d="M398.4,62 L403.4,65.6 L401.4,71 H395.4 L393.4,65.6 Z" fill="none" stroke="#a5a5a5" stroke-width=".7"/>
<circle cx="398.6" cy="67" r="2.7" fill="url(#yd)" stroke="#9a860a" stroke-width=".5"/>
<circle cx="405.4" cy="65.6" r="2.7" fill="url(#yd)" stroke="#9a860a" stroke-width=".5"/>
<rect x="417.6" y="61.4" width="11.6" height="11" fill="#e4e4e4" stroke="#8c8c8c" stroke-width="1.6"/><rect x="419.4" y="63.2" width="8" height="7.4" fill="none" stroke="#b0b0b0" stroke-width=".6"/>
<circle cx="417.4" cy="72.6" r="2.7" fill="url(#yd)" stroke="#9a860a" stroke-width=".5"/>
<circle cx="429.2" cy="61.2" r="2.7" fill="url(#yd)" stroke="#9a860a" stroke-width=".5"/>
<text transform="translate(436.6,73.4) scale(1.22,1)" font-family="Liberation Serif" font-style="italic" font-weight="bold" font-size="19.5" fill="url(#yl)" stroke="#8a7808" stroke-width=".6">A</text>
<text x="463.4" y="63" font-family="Liberation Sans" font-weight="bold" font-size="5.6" fill="#333" textLength="12">1.00</text>
<path d="M462.6,64 V72 M477,64 V72" fill="none" stroke="#555" stroke-width="1.3" stroke-linecap="round"/>
<path d="M462.6,66.2 H477" fill="none" stroke="#555" stroke-width="1.3" stroke-linecap="round"/>
<circle cx="462.6" cy="72.8" r="2.2" fill="url(#yd)" stroke="#9a860a" stroke-width=".5"/>
<circle cx="477" cy="72.8" r="2.2" fill="url(#yd)" stroke="#9a860a" stroke-width=".5"/>
<circle cx="469.8" cy="66.4" r="2.2" fill="url(#yd)" stroke="#9a860a" stroke-width=".5"/>
<path d="M486.4,70 C487.4,59.6 497.4,59.6 498.4,70" fill="none" stroke="#a2a2a2" stroke-width="2.2" stroke-linecap="round"/>
<circle cx="486.4" cy="70.4" r="2.7" fill="url(#yd)" stroke="#9a860a" stroke-width=".5"/>
<circle cx="492.4" cy="61.8" r="2.7" fill="url(#yd)" stroke="#9a860a" stroke-width=".5"/>
<circle cx="498.4" cy="70.6" r="2.7" fill="url(#yd)" stroke="#9a860a" stroke-width=".5"/>
<circle cx="515.4" cy="67" r="3" fill="url(#yd)" stroke="#9a860a" stroke-width=".5"/>
<text transform="translate(530,74.6) scale(1.32,1)" font-family="Liberation Serif" font-style="italic" font-size="23" fill="url(#yl)" stroke="#8a7808" stroke-width=".6">S</text>
<path d="M553.4,63.6 L562.4,59.4 V73.4 L553.4,74.4 Z" fill="url(#yl)" stroke="#8a7808" stroke-width=".6"/><path d="M562.4,59.4 L570.6,58.8 V62.2 L565.6,63.2 V65 L570.6,64.4 V67.6 L565.6,68.8 V72.6 L562.4,73.4 Z" fill="#d9c012" stroke="#8a7808" stroke-width=".6"/>
<path d="M578.6,62 V72.6 M591,62 V72.6" fill="none" stroke="#7f8a96" stroke-width="2" stroke-linecap="round"/>
<path d="M578.6,72 C579,63 590.6,63 591,72" fill="none" stroke="#9a9a9a" stroke-width="1.8" stroke-linecap="round"/>
<circle cx="578.6" cy="61.4" r="2.3" fill="url(#yd)" stroke="#9a860a" stroke-width=".5"/>
<circle cx="591" cy="61.4" r="2.3" fill="url(#yd)" stroke="#9a860a" stroke-width=".5"/>
<circle cx="578.6" cy="72.8" r="2.3" fill="url(#yd)" stroke="#9a860a" stroke-width=".5"/>
<circle cx="591" cy="72.8" r="2.3" fill="url(#yd)" stroke="#9a860a" stroke-width=".5"/>
<path d="M599.6,60.8 H609 L613.8,64.4 L609,68 H599.6 Z" fill="#e0e0d4" stroke="#6a6a5a" stroke-width=".9"/><path d="M601.4,63.2 H607.4 M601.4,65.6 H607.4" stroke="#77776a" stroke-width=".8"/><path d="M612.6,65 L614.6,70" stroke="#6a6a5a" stroke-width="1"/>
<circle cx="614.6" cy="72" r="2.3" fill="url(#yd)" stroke="#9a860a" stroke-width=".5"/>
<path d="M640,59.8 L643.6,63.6 H641.4 V65.8 H644.8 V63.6 L648.6,67.2 L644.8,70.8 V68.6 H641.4 V71 H643.6 L640,74.6 L636.4,71 H638.6 V68.6 H635.2 V70.8 L631.4,67.2 L635.2,63.6 V65.8 H638.6 V63.6 H636.4 Z" fill="url(#bl)" stroke="#27558f" stroke-width=".5"/>
<path d="M665.6,62.4 A6.4,6.4 0 1 1 657.6,66.6" fill="none" stroke="#3a6eae" stroke-width="3"/><path d="M666.4,58.6 V66 L660.6,62.2 Z" fill="#3a6eae"/>
<path d="M678.4,60.8 H693.6 V68.4 C693.6,72 690.6,74.2 687,74.2 V71.4 C689.2,71.4 690.6,70.2 690.6,68.4 V63.8 H678.4 Z" fill="url(#bl)" stroke="#27558f" stroke-width=".5"/><path d="M681.4,66 H688 V68.4 C688,70 686.6,70.8 684.8,70.8 C683,70.8 681.8,69.8 681.8,68.4" fill="none" stroke="#3a6aa8" stroke-width="1.7"/>
<path d="M709.4,59.6 V74.6" stroke="#3a6aa8" stroke-width="1.6"/><path d="M700.8,67.2 L704.8,63.8 L707.8,66.4 V68 L704.8,70.6 Z" fill="url(#bl)" stroke="#27558f" stroke-width=".5"/><path d="M718,67.2 L714,63.8 L711,66.4 V68 L714,70.6 Z" fill="url(#bl)" stroke="#27558f" stroke-width=".5"/>
<path d="M724.4,67.2 H741.6" stroke="#5a84ba" stroke-width="1.4"/><path d="M725.6,67.2 L729.2,64 L732.8,67.2 L729.2,70.4 Z" fill="url(#bl)" stroke="#27558f" stroke-width=".5"/><path d="M740.4,67.2 L736.8,64 L733.2,67.2 L736.8,70.4 Z" fill="url(#bl)" stroke="#27558f" stroke-width=".5"/>
<path d="M747,67.2 H764.6" stroke="#9aa2ac" stroke-width="1.8"/><rect x="752.4" y="59.6" width="2.4" height="15" fill="url(#bl)" stroke="#27558f" stroke-width=".5"/><rect x="756.8" y="59.6" width="2.4" height="15" fill="url(#bl)" stroke="#27558f" stroke-width=".5"/>
<path d="M779,59 L787,67 H782.4 V75 H775.6 V67 H771 Z" fill="url(#bl)" stroke="#27558f" stroke-width=".5"/>
<path d="M802.4,75 L810.4,67 H805.8 V59 H799 V67 H794.4 Z" fill="url(#bl)" stroke="#27558f" stroke-width=".5"/>
<rect x="817.4" y="59.8" width="16" height="14.6" fill="none" stroke="#2f62a3" stroke-width="1.6" stroke-dasharray="2.6 1.2"/><rect x="818.6" y="67.4" width="6.6" height="6" fill="#f0f0f0" stroke="#2f62a3" stroke-width="1.5"/><path d="M827,66 L831.4,61.6 M828.4,61.4 H831.6 V64.6" fill="none" stroke="#2f62a3" stroke-width="1.3"/>
</svg>
<svg class="abs" style="left:620.6px;top:58px" width="2" height="18" viewBox="0 0 2 18"><rect x="0" y="0.0" width="1.2" height="1.2" fill="#b5b5b5"/><rect x="0" y="2.7" width="1.2" height="1.2" fill="#b5b5b5"/><rect x="0" y="5.4" width="1.2" height="1.2" fill="#b5b5b5"/><rect x="0" y="8.1" width="1.2" height="1.2" fill="#b5b5b5"/><rect x="0" y="10.8" width="1.2" height="1.2" fill="#b5b5b5"/><rect x="0" y="13.5" width="1.2" height="1.2" fill="#b5b5b5"/></svg>
<!-- 3D view -->
<div id="view"></div>
<svg id="viewsvg" viewBox="0 0 835 768">
<polygon points="446.3,544.5 525.5,541.8 528.2,620.5 449.0,623.2" fill="rgba(50,50,95,0.30)"/>
<line x1="446.30" y1="544.50" x2="449.00" y2="623.20" stroke="rgba(40,40,85,0.30)" stroke-width="1"/>
<line x1="446.30" y1="544.50" x2="525.50" y2="541.80" stroke="rgba(40,40,85,0.30)" stroke-width="1"/>
<line x1="450.26" y1="544.37" x2="452.96" y2="623.07" stroke="rgba(40,40,85,0.14)" stroke-width="1"/>
<line x1="446.44" y1="548.43" x2="525.63" y2="545.73" stroke="rgba(40,40,85,0.14)" stroke-width="1"/>
<line x1="454.22" y1="544.23" x2="456.92" y2="622.93" stroke="rgba(40,40,85,0.30)" stroke-width="1"/>
<line x1="446.57" y1="552.37" x2="525.77" y2="549.67" stroke="rgba(40,40,85,0.30)" stroke-width="1"/>
<line x1="458.18" y1="544.10" x2="460.88" y2="622.80" stroke="rgba(40,40,85,0.14)" stroke-width="1"/>
<line x1="446.70" y1="556.31" x2="525.90" y2="553.61" stroke="rgba(40,40,85,0.14)" stroke-width="1"/>
<line x1="462.14" y1="543.96" x2="464.84" y2="622.66" stroke="rgba(40,40,85,0.30)" stroke-width="1"/>
<line x1="446.84" y1="560.24" x2="526.04" y2="557.54" stroke="rgba(40,40,85,0.30)" stroke-width="1"/>
<line x1="466.10" y1="543.83" x2="468.80" y2="622.53" stroke="rgba(40,40,85,0.14)" stroke-width="1"/>
<line x1="446.98" y1="564.17" x2="526.17" y2="561.47" stroke="rgba(40,40,85,0.14)" stroke-width="1"/>
<line x1="470.06" y1="543.69" x2="472.76" y2="622.39" stroke="rgba(40,40,85,0.30)" stroke-width="1"/>
<line x1="447.11" y1="568.11" x2="526.31" y2="565.41" stroke="rgba(40,40,85,0.30)" stroke-width="1"/>
<line x1="474.02" y1="543.55" x2="476.72" y2="622.25" stroke="rgba(40,40,85,0.14)" stroke-width="1"/>
<line x1="447.25" y1="572.05" x2="526.45" y2="569.35" stroke="rgba(40,40,85,0.14)" stroke-width="1"/>
<line x1="477.98" y1="543.42" x2="480.68" y2="622.12" stroke="rgba(40,40,85,0.30)" stroke-width="1"/>
<line x1="447.38" y1="575.98" x2="526.58" y2="573.28" stroke="rgba(40,40,85,0.30)" stroke-width="1"/>
<line x1="481.94" y1="543.28" x2="484.64" y2="621.99" stroke="rgba(40,40,85,0.14)" stroke-width="1"/>
<line x1="447.51" y1="579.91" x2="526.72" y2="577.21" stroke="rgba(40,40,85,0.14)" stroke-width="1"/>
<line x1="485.90" y1="543.15" x2="488.60" y2="621.85" stroke="rgba(40,40,85,0.30)" stroke-width="1"/>
<line x1="447.65" y1="583.85" x2="526.85" y2="581.15" stroke="rgba(40,40,85,0.30)" stroke-width="1"/>
<line x1="489.86" y1="543.01" x2="492.56" y2="621.72" stroke="rgba(40,40,85,0.14)" stroke-width="1"/>
<line x1="447.79" y1="587.79" x2="526.99" y2="585.09" stroke="rgba(40,40,85,0.14)" stroke-width="1"/>
<line x1="493.82" y1="542.88" x2="496.52" y2="621.58" stroke="rgba(40,40,85,0.30)" stroke-width="1"/>
<line x1="447.92" y1="591.72" x2="527.12" y2="589.02" stroke="rgba(40,40,85,0.30)" stroke-width="1"/>
<line x1="497.78" y1="542.75" x2="500.48" y2="621.45" stroke="rgba(40,40,85,0.14)" stroke-width="1"/>
<line x1="448.06" y1="595.65" x2="527.25" y2="592.95" stroke="rgba(40,40,85,0.14)" stroke-width="1"/>
<line x1="501.74" y1="542.61" x2="504.44" y2="621.31" stroke="rgba(40,40,85,0.30)" stroke-width="1"/>
<line x1="448.19" y1="599.59" x2="527.39" y2="596.89" stroke="rgba(40,40,85,0.30)" stroke-width="1"/>
<line x1="505.70" y1="542.47" x2="508.40" y2="621.17" stroke="rgba(40,40,85,0.14)" stroke-width="1"/>
<line x1="448.32" y1="603.53" x2="527.53" y2="600.83" stroke="rgba(40,40,85,0.14)" stroke-width="1"/>
<line x1="509.66" y1="542.34" x2="512.36" y2="621.04" stroke="rgba(40,40,85,0.30)" stroke-width="1"/>
<line x1="448.46" y1="607.46" x2="527.66" y2="604.76" stroke="rgba(40,40,85,0.30)" stroke-width="1"/>
<line x1="513.62" y1="542.20" x2="516.32" y2="620.90" stroke="rgba(40,40,85,0.14)" stroke-width="1"/>
<line x1="448.60" y1="611.39" x2="527.80" y2="608.69" stroke="rgba(40,40,85,0.14)" stroke-width="1"/>
<line x1="517.58" y1="542.07" x2="520.28" y2="620.77" stroke="rgba(40,40,85,0.30)" stroke-width="1"/>
<line x1="448.73" y1="615.33" x2="527.93" y2="612.63" stroke="rgba(40,40,85,0.30)" stroke-width="1"/>
<line x1="521.54" y1="541.93" x2="524.24" y2="620.63" stroke="rgba(40,40,85,0.14)" stroke-width="1"/>
<line x1="448.87" y1="619.27" x2="528.07" y2="616.57" stroke="rgba(40,40,85,0.14)" stroke-width="1"/>
<line x1="525.50" y1="541.80" x2="528.20" y2="620.50" stroke="rgba(40,40,85,0.30)" stroke-width="1"/>
<line x1="449.00" y1="623.20" x2="528.20" y2="620.50" stroke="rgba(40,40,85,0.30)" stroke-width="1"/>
<defs><g id="cell"><path d="M-0.272,-0.5 L0.272,-0.5 A0.228,0.228 0 0 0 0.5,-0.272 L0.5,0.272 A0.228,0.228 0 0 0 0.272,0.5 L-0.272,0.5 A0.228,0.228 0 0 0 -0.5,0.272 L-0.5,-0.272 A0.228,0.228 0 0 0 -0.272,-0.5 Z M0.32,0 A0.32,0.32 0 1 0 -0.32,0 A0.32,0.32 0 1 0 0.32,0 Z" fill="#efefef" fill-rule="evenodd"/><path d="M-0.272,-0.5 L0.272,-0.5 A0.228,0.228 0 0 0 0.5,-0.272 L0.5,0.272 A0.228,0.228 0 0 0 0.272,0.5 L-0.272,0.5 A0.228,0.228 0 0 0 -0.5,0.272 L-0.5,-0.272 A0.228,0.228 0 0 0 -0.272,-0.5 Z" fill="none" stroke="#0a0a0a" stroke-width="0.043"/><path d="M0.32,0 A0.32,0.32 0 1 0 -0.32,0 A0.32,0.32 0 1 0 0.32,0 Z" fill="none" stroke="#15151f" stroke-width="0.03"/><path d="M0.1707,-0.4120 L0.4120,-0.1707 L0.4120,0.1707 L0.1707,0.4120 L-0.1707,0.4120 L-0.4120,0.1707 L-0.4120,-0.1707 L-0.1707,-0.4120 Z" fill="none" stroke="#111" stroke-width="0.042"/></g></defs>
<use href="#cell" transform="matrix(33.767,-1.111,1.122,33.811,477.30,278.70)"/>
<use href="#cell" transform="matrix(33.767,-1.111,1.115,33.805,511.07,277.59)"/>
<use href="#cell" transform="matrix(33.767,-1.111,1.107,33.799,544.83,276.48)"/>
<use href="#cell" transform="matrix(33.767,-1.111,1.100,33.793,578.60,275.37)"/>
<use href="#cell" transform="matrix(33.767,-1.111,1.093,33.786,612.37,274.26)"/>
<use href="#cell" transform="matrix(33.767,-1.111,1.085,33.780,646.13,273.14)"/>
<use href="#cell" transform="matrix(33.767,-1.111,1.078,33.774,679.90,272.03)"/>
<use href="#cell" transform="matrix(33.767,-1.111,1.070,33.768,713.67,270.92)"/>
<use href="#cell" transform="matrix(33.767,-1.111,1.063,33.762,747.43,269.81)"/>
<use href="#cell" transform="matrix(33.767,-1.111,1.056,33.756,781.20,268.70)"/>
<use href="#cell" transform="matrix(33.759,-1.117,1.122,33.811,478.42,312.51)"/>
<use href="#cell" transform="matrix(33.759,-1.117,1.115,33.805,512.18,311.39)"/>
<use href="#cell" transform="matrix(33.759,-1.117,1.107,33.799,545.94,310.28)"/>
<use href="#cell" transform="matrix(33.759,-1.117,1.100,33.793,579.70,309.16)"/>
<use href="#cell" transform="matrix(33.759,-1.117,1.093,33.786,613.46,308.04)"/>
<use href="#cell" transform="matrix(33.759,-1.117,1.085,33.780,647.22,306.92)"/>
<use href="#cell" transform="matrix(33.759,-1.117,1.078,33.774,680.98,305.81)"/>
<use href="#cell" transform="matrix(33.759,-1.117,1.070,33.768,714.74,304.69)"/>
<use href="#cell" transform="matrix(33.759,-1.117,1.063,33.762,748.50,303.57)"/>
<use href="#cell" transform="matrix(33.759,-1.117,1.056,33.756,782.26,302.46)"/>
<use href="#cell" transform="matrix(33.752,-1.123,1.122,33.811,479.54,346.32)"/>
<use href="#cell" transform="matrix(33.752,-1.123,1.115,33.805,513.30,345.20)"/>
<use href="#cell" transform="matrix(33.752,-1.123,1.107,33.799,547.05,344.08)"/>
<use href="#cell" transform="matrix(33.752,-1.123,1.100,33.793,580.80,342.95)"/>
<use href="#cell" transform="matrix(33.752,-1.123,1.093,33.786,614.55,341.83)"/>
<use href="#cell" transform="matrix(33.752,-1.123,1.085,33.780,648.30,340.70)"/>
<use href="#cell" transform="matrix(33.752,-1.123,1.078,33.774,682.06,339.58)"/>
<use href="#cell" transform="matrix(33.752,-1.123,1.070,33.768,715.81,338.46)"/>
<use href="#cell" transform="matrix(33.752,-1.123,1.063,33.762,749.56,337.33)"/>
<use href="#cell" transform="matrix(33.752,-1.123,1.056,33.756,783.31,336.21)"/>
<use href="#cell" transform="matrix(33.744,-1.130,1.122,33.811,480.67,380.13)"/>
<use href="#cell" transform="matrix(33.744,-1.130,1.115,33.805,514.41,379.00)"/>
<use href="#cell" transform="matrix(33.744,-1.130,1.107,33.799,548.16,377.87)"/>
<use href="#cell" transform="matrix(33.744,-1.130,1.100,33.793,581.90,376.74)"/>
<use href="#cell" transform="matrix(33.744,-1.130,1.093,33.786,615.64,375.61)"/>
<use href="#cell" transform="matrix(33.744,-1.130,1.085,33.780,649.39,374.49)"/>
<use href="#cell" transform="matrix(33.744,-1.130,1.078,33.774,683.13,373.36)"/>
<use href="#cell" transform="matrix(33.744,-1.130,1.070,33.768,716.88,372.23)"/>
<use href="#cell" transform="matrix(33.744,-1.130,1.063,33.762,750.62,371.10)"/>
<use href="#cell" transform="matrix(33.744,-1.130,1.056,33.756,784.37,369.97)"/>
<use href="#cell" transform="matrix(33.737,-1.136,1.122,33.811,481.79,413.94)"/>
<use href="#cell" transform="matrix(33.737,-1.136,1.115,33.805,515.53,412.81)"/>
<use href="#cell" transform="matrix(33.737,-1.136,1.107,33.799,549.26,411.67)"/>
<use href="#cell" transform="matrix(33.737,-1.136,1.100,33.793,583.00,410.54)"/>
<use href="#cell" transform="matrix(33.737,-1.136,1.093,33.786,616.74,409.40)"/>
<use href="#cell" transform="matrix(33.737,-1.136,1.085,33.780,650.47,408.27)"/>
<use href="#cell" transform="matrix(33.737,-1.136,1.078,33.774,684.21,407.13)"/>
<use href="#cell" transform="matrix(33.737,-1.136,1.070,33.768,717.95,405.99)"/>
<use href="#cell" transform="matrix(33.737,-1.136,1.063,33.762,751.69,404.86)"/>
<use href="#cell" transform="matrix(33.737,-1.136,1.056,33.756,785.42,403.72)"/>
<use href="#cell" transform="matrix(33.730,-1.142,1.122,33.811,482.91,447.76)"/>
<use href="#cell" transform="matrix(33.730,-1.142,1.115,33.805,516.64,446.61)"/>
<use href="#cell" transform="matrix(33.730,-1.142,1.107,33.799,550.37,445.47)"/>
<use href="#cell" transform="matrix(33.730,-1.142,1.100,33.793,584.10,444.33)"/>
<use href="#cell" transform="matrix(33.730,-1.142,1.093,33.786,617.83,443.19)"/>
<use href="#cell" transform="matrix(33.730,-1.142,1.085,33.780,651.56,442.05)"/>
<use href="#cell" transform="matrix(33.730,-1.142,1.078,33.774,685.29,440.90)"/>
<use href="#cell" transform="matrix(33.730,-1.142,1.070,33.768,719.02,439.76)"/>
<use href="#cell" transform="matrix(33.730,-1.142,1.063,33.762,752.75,438.62)"/>
<use href="#cell" transform="matrix(33.730,-1.142,1.056,33.756,786.48,437.48)"/>
<use href="#cell" transform="matrix(33.722,-1.148,1.122,33.811,484.03,481.57)"/>
<use href="#cell" transform="matrix(33.722,-1.148,1.115,33.805,517.76,480.42)"/>
<use href="#cell" transform="matrix(33.722,-1.148,1.107,33.799,551.48,479.27)"/>
<use href="#cell" transform="matrix(33.722,-1.148,1.100,33.793,585.20,478.12)"/>
<use href="#cell" transform="matrix(33.722,-1.148,1.093,33.786,618.92,476.97)"/>
<use href="#cell" transform="matrix(33.722,-1.148,1.085,33.780,652.64,475.83)"/>
<use href="#cell" transform="matrix(33.722,-1.148,1.078,33.774,686.37,474.68)"/>
<use href="#cell" transform="matrix(33.722,-1.148,1.070,33.768,720.09,473.53)"/>
<use href="#cell" transform="matrix(33.722,-1.148,1.063,33.762,753.81,472.38)"/>
<use href="#cell" transform="matrix(33.722,-1.148,1.056,33.756,787.53,471.23)"/>
<use href="#cell" transform="matrix(33.715,-1.154,1.122,33.811,485.16,515.38)"/>
<use href="#cell" transform="matrix(33.715,-1.154,1.115,33.805,518.87,514.22)"/>
<use href="#cell" transform="matrix(33.715,-1.154,1.107,33.799,552.59,513.07)"/>
<use href="#cell" transform="matrix(33.715,-1.154,1.100,33.793,586.30,511.91)"/>
<use href="#cell" transform="matrix(33.715,-1.154,1.093,33.786,620.01,510.76)"/>
<use href="#cell" transform="matrix(33.715,-1.154,1.085,33.780,653.73,509.61)"/>
<use href="#cell" transform="matrix(33.715,-1.154,1.078,33.774,687.44,508.45)"/>
<use href="#cell" transform="matrix(33.715,-1.154,1.070,33.768,721.16,507.30)"/>
<use href="#cell" transform="matrix(33.715,-1.154,1.063,33.762,754.87,506.14)"/>
<use href="#cell" transform="matrix(33.715,-1.154,1.056,33.756,788.59,504.99)"/>
<use href="#cell" transform="matrix(33.707,-1.160,1.122,33.811,486.28,549.19)"/>
<use href="#cell" transform="matrix(33.707,-1.160,1.115,33.805,519.99,548.03)"/>
<use href="#cell" transform="matrix(33.707,-1.160,1.107,33.799,553.69,546.87)"/>
<use href="#cell" transform="matrix(33.707,-1.160,1.100,33.793,587.40,545.71)"/>
<use href="#cell" transform="matrix(33.707,-1.160,1.093,33.786,621.11,544.55)"/>
<use href="#cell" transform="matrix(33.707,-1.160,1.085,33.780,654.81,543.39)"/>
<use href="#cell" transform="matrix(33.707,-1.160,1.078,33.774,688.52,542.23)"/>
<use href="#cell" transform="matrix(33.707,-1.160,1.070,33.768,722.23,541.07)"/>
<use href="#cell" transform="matrix(33.707,-1.160,1.063,33.762,755.94,539.90)"/>
<use href="#cell" transform="matrix(33.707,-1.160,1.056,33.756,789.64,538.74)"/>
<use href="#cell" transform="matrix(33.700,-1.167,1.122,33.811,487.40,583.00)"/>
<use href="#cell" transform="matrix(33.700,-1.167,1.115,33.805,521.10,581.83)"/>
<use href="#cell" transform="matrix(33.700,-1.167,1.107,33.799,554.80,580.67)"/>
<use href="#cell" transform="matrix(33.700,-1.167,1.100,33.793,588.50,579.50)"/>
<use href="#cell" transform="matrix(33.700,-1.167,1.093,33.786,622.20,578.33)"/>
<use href="#cell" transform="matrix(33.700,-1.167,1.085,33.780,655.90,577.17)"/>
<use href="#cell" transform="matrix(33.700,-1.167,1.078,33.774,689.60,576.00)"/>
<use href="#cell" transform="matrix(33.700,-1.167,1.070,33.768,723.30,574.83)"/>
<use href="#cell" transform="matrix(33.700,-1.167,1.063,33.762,757.00,573.67)"/>
<use href="#cell" transform="matrix(33.700,-1.167,1.056,33.756,790.70,572.50)"/>
</svg>
<!-- bottom doc tab -->
<div class="abs" style="left:296px;top:747px;width:539px;height:22px;background:#f0f0f0"></div>
<div class="abs" style="left:296px;top:747px;width:107px;height:17.4px;background:#fff;border-right:1px solid #dcdcdc;border-bottom:1px solid #e4e4e4"></div>
<svg class="abs" style="left:304.6px;top:748.6px" width="12.6" height="12.6" viewBox="0 0 12.6 12.6"><path d="M0.6,0.4 H7.8 V2.8 H3.2 V5 H6.4 V7.2 H3.2 V11.8 H0.6 Z" fill="#d8141c"/><path d="M0.6,0.4 H1.6 V11.8 H0.6 Z" fill="#9a0a10"/>
<g transform="translate(8.4,8.2)"><circle r="3.1" fill="#2f5fa8"/><g stroke="#2f5fa8" stroke-width="1.5"><path d="M0,-4.2 V4.2 M-4.2,0 H4.2 M-3,-3 L3,3 M-3,3 L3,-3"/></g><circle r="1.3" fill="#e8eefc"/></g></svg>
<div class="abs" style="left:320.2px;top:750.6px;font-size:9.3px;color:#15152a;white-space:nowrap;transform:scaleX(.94);transform-origin:0 0">Unbenannt : 1*</div>
<svg class="abs" style="left:383px;top:751.2px" width="9.8" height="9.4" viewBox="0 0 9.8 9.4"><rect x=".3" y=".3" width="9.2" height="8.8" rx="1.5" fill="#e2724a" stroke="#c8552e" stroke-width=".6"/><path d="M3,2.8 L6.8,6.6 M6.8,2.8 L3,6.6" stroke="#fff" stroke-width="1.5" stroke-linecap="round"/></svg>
<!-- panel -->
<div id="panel">
 <div id="ptitle"><span>Combo-Ansicht</span>
  <svg class="abs" style="left:272.5px;top:3.2px" width="8" height="8" viewBox="0 0 8 8"><path d="M2.6,0.8 H7.2 V4.6 H2.6 Z M0.8,3 H5 V7 H0.8 Z" fill="#dcdcdc" stroke="#111" stroke-width="1.1"/><path d="M2.6,1.2 H7.2 M0.8,3.4 H5" stroke="#111" stroke-width="1.2"/></svg>
  <svg class="abs" style="left:284.2px;top:3.7px" width="7" height="7" viewBox="0 0 7 7"><path d="M1,1 L6,6 M6,1 L1,6" stroke="#111" stroke-width="1.4"/></svg>
 </div>
 <div class="tab1" style="left:1px;width:41px;top:14.6px;height:16px;background:#fff;border:1px solid #d4d4d4;border-bottom:none"><span class="tx" style="left:7px;top:2px;transform:scaleX(.86)">Modell</span></div>
 <div class="tab1" style="left:42px;width:52px;top:16.4px;height:14px;background:#f0f0f0;border:1px solid #dcdcdc;border-left:none;border-bottom:none"><span class="tx" style="left:8.3px;top:0.4px;transform:scaleX(.91)">Aufgaben</span></div>
 <div id="tree">
  <span class="tx" style="left:1.8px;top:5px;font-size:9.15px">Bezeichnungen &amp; Eigenschaften</span>
  <div class="abs" style="left:147.5px;top:0;width:1px;height:18px;background:#e8e8e8"></div>
  <!-- rows -->
  <svg class="abs" style="left:33px;top:22.5px" width="8" height="8" viewBox="0 0 8 8"><path d="M2.6,1.4 L5.2,4 L2.6,6.6" fill="none" stroke="#a8a8a8" stroke-width="1.1"/></svg>
  <svg class="abs" style="left:33px;top:36px" width="8" height="8" viewBox="0 0 8 8"><path d="M2.6,1.4 L5.2,4 L2.6,6.6" fill="none" stroke="#a8a8a8" stroke-width="1.1"/></svg>
  <svg class="abs" style="left:45.5px;top:20px" width="14" height="13" viewBox="0 0 14 13"><path d="M0.8,5 L7,2.2 L13,4.6 L13,8.4 L6.6,11.6 L0.8,8.8 Z" fill="#8e8e8e"/><path d="M0.8,5 L7,2.2 L13,4.6 L6.6,7.6 Z" fill="#b9b9b9"/><path d="M4,4.6 L7.2,3.3 L10,4.6 L6.8,6 Z" fill="#7a7a7a"/></svg>
  <svg class="abs" style="left:45.5px;top:33.6px" width="15" height="14" viewBox="0 0 15 14"><path d="M0.8,5 L7,2.2 L13,4.6 L13,8.4 L6.6,11.6 L0.8,8.8 Z" fill="#8e8e8e"/><path d="M0.8,5 L7,2.2 L13,4.6 L6.6,7.6 Z" fill="#b9b9b9"/><path d="M4,4.6 L7.2,3.3 L10,4.6 L6.8,6 Z" fill="#7a7a7a"/><circle cx="11" cy="10.2" r="2.6" fill="#fff" stroke="#9a9a9a" stroke-width=".8"/></svg>
  <span class="tx" style="left:63px;top:21.3px;font-size:9.2px;color:#9d9d9d;transform:scaleX(.93)">Pocket</span>
  <span class="tx" style="left:63px;top:34.8px;font-size:9.2px;color:#9d9d9d;transform:scaleX(.955)">Pocket001</span>
  <div class="abs" style="left:29.4px;top:46.8px;width:119.5px;height:14.2px;background:#d6d6d6"></div>
  <svg class="abs" style="left:17.5px;top:51px" width="8" height="8" viewBox="0 0 8 8"><path d="M2.6,1.4 L5.2,4 L2.6,6.6" fill="none" stroke="#8c8c8c" stroke-width="1.1"/></svg>
  <svg class="abs" style="left:31.5px;top:48.5px" width="12" height="11.5" viewBox="0 0 12 11.5" preserveAspectRatio="none"><rect width="12" height="11.5" fill="#2a6bb5"/><path d="M4,0 V11.5 M8,0 V11.5 M0,3.8 H12 M0,7.7 H12" stroke="#8fb8e4" stroke-width=".8"/></svg>
  <span class="tx" style="left:47.8px;top:50px;font-size:9.2px;color:#111">Array</span>
  <!-- scrollbar -->
  <div class="abs" style="left:275.5px;top:0;width:11.5px;height:64px;background:#f0f0f0"></div>
  <svg class="abs" style="left:277.5px;top:4.5px" width="8" height="6" viewBox="0 0 8 6"><path d="M1,4.6 L4,1.6 L7,4.6" fill="none" stroke="#555" stroke-width="1.3"/></svg>
  <div class="abs" style="left:275.5px;top:38px;width:11.5px;height:13.5px;background:#cdcdcd"></div>
  <svg class="abs" style="left:277.5px;top:56px" width="8" height="6" viewBox="0 0 8 6"><path d="M1,1.4 L4,4.4 L7,1.4" fill="none" stroke="#555" stroke-width="1.3"/></svg>
 </div>
<div class="abs" style="left:0.5px;top:96.6px;width:290.6px;height:586.6px;background:#fff"></div>
<svg class="abs" style="left:0;top:668px" width="100" height="16" viewBox="0 668 100 16">
  <path d="M1.5,669.6 C2.6,675 3,680.4 7,680.4 H40 C44,680.4 44.4,675 46,669.6 Z" fill="#efefef" stroke="#6e6e6e" stroke-width=".9"/>
  <path d="M46,669.2 C47.6,675 48,681.2 52,681.2 H81 C85,681.2 85.6,675 87.4,669.2" fill="#fff" stroke="#5a5a5a" stroke-width=".9"/>
  <rect x="46.6" y="668" width="40.2" height="1.8" fill="#fff"/>
 </svg>
 <span class="tx" style="left:10.4px;top:670.6px;transform:scaleX(.9)">Ansicht</span>
 <span class="tx" style="left:55.8px;top:671.8px;transform:scaleX(.89)">Daten</span>
 <div id="tbl">
  <div class="abs hd" style="left:3.3px;top:5.2px">Eigenschaft</div>
  <div class="abs hd" style="left:80.3px;top:5.2px">Wert</div>
  <div class="coldiv"></div>
 </div>
  <div id="rows">
<div class="grp" style="top:200.30px;height:16.32px"><span style="left:17.3px">Basis</span></div>
<div class="row alt" style="top:216.62px;height:16.32px">
<svg class="arr" style="left:2.700000000000001px" width="9" height="9" viewBox="0 0 9 9"><path d="M1.4,3 L4.5,6 L7.6,3" fill="none" stroke="#333" stroke-width="1.25"/></svg>
<span class="nm" style="left:17.3px">Placement</span>
<span class="vl">[(0,00 0,00 1,00); 0,00 °; (0,00 mm&nbsp; 0,00 mm&nbsp; ...</span>
<div class="ln" style="left:14.3px"></div>
</div>
<div class="row" style="top:232.95px;height:16.32px">
<span class="nm" style="left:32.4px">Winkel</span>
<span class="vl">0,00 °</span>
<div class="ln" style="left:29.4px"></div>
</div>
<div class="row alt" style="top:249.27px;height:16.32px">
<svg class="arr" style="left:17.099999999999998px" width="9" height="9" viewBox="0 0 9 9"><path d="M3,1.2 L6.2,4.5 L3,7.8" fill="none" stroke="#8a8a8a" stroke-width="1.2"/></svg>
<span class="nm" style="left:32.4px">Achse</span>
<span class="vl">[0,00 0,00 1,00]</span>
<div class="ln" style="left:29.4px"></div>
</div>
<div class="row" style="top:265.60px;height:16.32px">
<svg class="arr" style="left:17.799999999999997px" width="9" height="9" viewBox="0 0 9 9"><path d="M1.4,3 L4.5,6 L7.6,3" fill="none" stroke="#333" stroke-width="1.25"/></svg>
<span class="nm" style="left:32.4px">Position</span>
<span class="vl">[0,00 mm&nbsp; 0,00 mm&nbsp; 0,00 mm]</span>
<div class="ln" style="left:29.4px"></div>
</div>
<div class="row alt" style="top:281.92px;height:16.32px">
<span class="nm" style="left:46.6px">x</span>
<span class="vl">0,00 mm</span>
<div class="ln" style="left:43.6px"></div>
</div>
<div class="row" style="top:298.24px;height:16.32px">
<span class="nm" style="left:46.6px">y</span>
<span class="vl">0,00 mm</span>
<div class="ln" style="left:43.6px"></div>
</div>
<div class="row alt" style="top:314.57px;height:16.32px">
<span class="nm" style="left:46.6px">z</span>
<span class="vl">0,00 mm</span>
<div class="ln" style="left:43.6px"></div>
</div>
<div class="row" style="top:330.89px;height:16.32px">
<span class="nm" style="left:17.3px">Label</span>
<span class="vl">Array</span>
<div class="ln" style="left:14.3px"></div>
</div>
<div class="grp" style="top:347.22px;height:16.32px"><span style="left:17.3px">Draft</span></div>
<div class="row" style="top:363.54px;height:16.32px">
<span class="nm" style="left:17.3px">Winkel</span>
<span class="vl">360,00 °</span>
<div class="ln" style="left:14.3px"></div>
</div>
<div class="row alt" style="top:379.86px;height:16.32px">
<span class="nm" style="left:17.3px">Array Type</span>
<span class="vl">ortho</span>
<div class="ln" style="left:14.3px"></div>
</div>
<div class="row" style="top:396.19px;height:16.32px">
<svg class="arr" style="left:2.0px" width="9" height="9" viewBox="0 0 9 9"><path d="M3,1.2 L6.2,4.5 L3,7.8" fill="none" stroke="#8a8a8a" stroke-width="1.2"/></svg>
<span class="nm" style="left:17.3px">Achse</span>
<span class="vl">[0,00 0,00 1,00]</span>
<div class="ln" style="left:14.3px"></div>
</div>
<div class="row alt" style="top:412.51px;height:16.32px">
<span class="nm" style="left:17.3px">Basis</span>
<span class="vl">Pocket001</span>
<div class="ln" style="left:14.3px"></div>
</div>
<div class="row" style="top:428.84px;height:16.32px">
<svg class="arr" style="left:2.0px" width="9" height="9" viewBox="0 0 9 9"><path d="M3,1.2 L6.2,4.5 L3,7.8" fill="none" stroke="#8a8a8a" stroke-width="1.2"/></svg>
<span class="nm" style="left:17.3px">Center</span>
<span class="vl">[0,00 mm&nbsp; 0,00 mm&nbsp; 0,00 mm]</span>
<div class="ln" style="left:14.3px"></div>
</div>
<div class="row alt" style="top:445.16px;height:16.32px">
<span class="nm" style="left:17.3px">Fuse</span>
<span class="vl">false</span>
<div class="ln" style="left:14.3px"></div>
</div>
<div class="row" style="top:461.48px;height:16.32px">
<svg class="arr" style="left:2.0px" width="9" height="9" viewBox="0 0 9 9"><path d="M3,1.2 L6.2,4.5 L3,7.8" fill="none" stroke="#8a8a8a" stroke-width="1.2"/></svg>
<span class="nm" style="left:17.3px">Interval Axis</span>
<span class="vl">[0,00 mm&nbsp; 0,00 mm&nbsp; 0,00 mm]</span>
<div class="ln" style="left:14.3px"></div>
</div>
<div class="row alt" style="top:477.81px;height:16.32px">
<svg class="arr" style="left:2.700000000000001px" width="9" height="9" viewBox="0 0 9 9"><path d="M1.4,3 L4.5,6 L7.6,3" fill="none" stroke="#333" stroke-width="1.25"/></svg>
<span class="nm" style="left:17.3px">Interval X</span>
<span class="vl">[43,00 mm&nbsp; 0,00 mm&nbsp; 0,00 mm]</span>
<div class="ln" style="left:14.3px"></div>
</div>
<div class="row" style="top:494.13px;height:16.32px">
<span class="nm" style="left:32.4px">x</span>
<span class="vl">43,00 mm</span>
<div class="ln" style="left:29.4px"></div>
</div>
<div class="row alt" style="top:510.46px;height:16.32px">
<span class="nm" style="left:32.4px">y</span>
<span class="vl">0,00 mm</span>
<div class="ln" style="left:29.4px"></div>
</div>
<div class="row" style="top:526.78px;height:16.32px">
<span class="nm" style="left:32.4px">z</span>
<span class="vl">0,00 mm</span>
<div class="ln" style="left:29.4px"></div>
</div>
<div class="row alt" style="top:543.10px;height:16.32px">
<svg class="arr" style="left:2.700000000000001px" width="9" height="9" viewBox="0 0 9 9"><path d="M1.4,3 L4.5,6 L7.6,3" fill="none" stroke="#333" stroke-width="1.25"/></svg>
<span class="nm" style="left:17.3px">Interval Y</span>
<span class="vl">[0,00 mm&nbsp; 43,00 mm&nbsp; 0,00 mm]</span>
<div class="ln" style="left:14.3px"></div>
</div>
<div class="row" style="top:559.43px;height:16.32px">
<span class="nm" style="left:32.4px">x</span>
<span class="vl">0,00 mm</span>
<div class="ln" style="left:29.4px"></div>
</div>
<div class="row alt" style="top:575.75px;height:16.32px">
<span class="nm" style="left:32.4px">y</span>
<span class="vl">43,00 mm</span>
<div class="ln" style="left:29.4px"></div>
</div>
<div class="row" style="top:592.08px;height:16.32px">
<span class="nm" style="left:32.4px">z</span>
<span class="vl">0,00 mm</span>
<div class="ln" style="left:29.4px"></div>
</div>
<div class="row alt" style="top:608.40px;height:16.32px">
<svg class="arr" style="left:2.700000000000001px" width="9" height="9" viewBox="0 0 9 9"><path d="M1.4,3 L4.5,6 L7.6,3" fill="none" stroke="#333" stroke-width="1.25"/></svg>
<span class="nm" style="left:17.3px">Interval Z</span>
<span class="vl">[0,00 mm&nbsp; 0,00 mm&nbsp; 0,00 mm]</span>
<div class="ln" style="left:14.3px"></div>
</div>
<div class="row" style="top:624.72px;height:16.32px">
<span class="nm" style="left:32.4px">x</span>
<span class="vl">0,00 mm</span>
<div class="ln" style="left:29.4px"></div>
</div>
<div class="row alt" style="top:641.05px;height:16.32px">
<span class="nm" style="left:32.4px">y</span>
<span class="vl">0,00 mm</span>
<div class="ln" style="left:29.4px"></div>
</div>
<div class="row" style="top:657.37px;height:16.32px">
<span class="nm" style="left:32.4px">z</span>
<span class="vl">0,00 mm</span>
<div class="ln" style="left:29.4px"></div>
</div>
<div class="row" style="top:673.70px;height:16.32px">
<span class="nm sel" style="left:16.3px;width:61.7px"><i>Number Polar</i></span>
<span class="vl">0</span>
<div class="ln" style="left:14.3px"></div>
<div class="abs" style="left:77.6px;top:0;width:206.4px;height:100%;background:#fff"></div><span class="vl">0</span>
<svg class="abs" style="left:257.6px;top:0.2px" width="12" height="12" viewBox="0 0 12 12"><circle cx="6" cy="6" r="5.3" fill="#dfe9f6" stroke="#5b86c2" stroke-width="1"/><text x="2" y="8.2" font-family="Liberation Serif" font-style="italic" font-weight="bold" font-size="6.5" fill="#4a78b8">f(x)</text></svg>
<div class="abs" style="left:271.6px;top:0px;width:11.6px;height:15.4px;background:#ededed;border:1px solid #c9c9c9"></div><div class="abs" style="left:272px;top:7.6px;width:11px;height:1px;background:#cfcfcf"></div>
<svg class="abs" style="left:275.2px;top:3px" width="4.6" height="3" viewBox="0 0 4.6 3"><path d="M0,3 L2.3,0 L4.6,3 Z" fill="#222"/></svg><svg class="abs" style="left:275.2px;top:10.4px" width="4.6" height="3" viewBox="0 0 4.6 3"><path d="M0,0 L2.3,3 L4.6,0 Z" fill="#222"/></svg>
</div>
<div class="row" style="top:690.02px;height:16.32px">
<span class="nm" style="left:17.3px">Number X</span>
<span class="vl">10</span>
<div class="ln" style="left:14.3px"></div>
</div>
<div class="row alt" style="top:706.34px;height:16.32px">
<span class="nm" style="left:17.3px">Number Y</span>
<span class="vl">10</span>
<div class="ln" style="left:14.3px"></div>
</div>
<div class="row" style="top:722.67px;height:16.32px">
<span class="nm" style="left:17.3px">Number Z</span>
<span class="vl">0</span>
<div class="ln" style="left:14.3px"></div>
</div>
  </div>
</div>
</div></body></html>
